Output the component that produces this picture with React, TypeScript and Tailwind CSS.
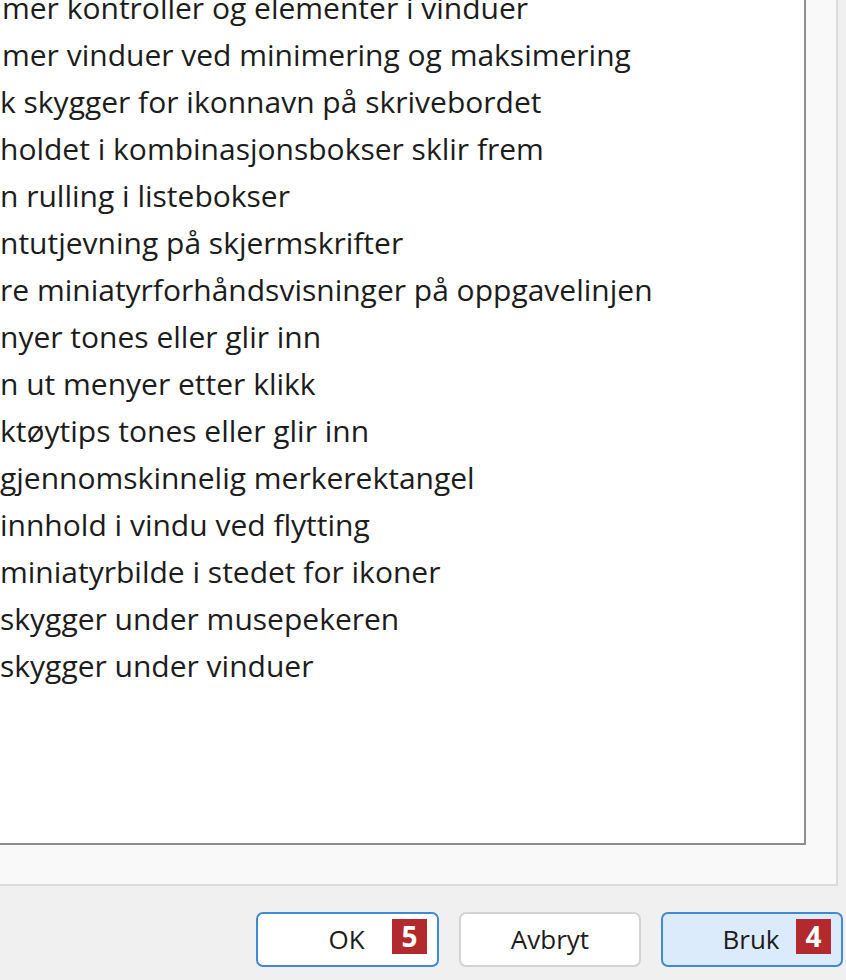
import React from 'react';

const rows: { text: string; indent: string }[] = [
  { text: 'mer kontroller og elementer i vinduer', indent: 'pl-[2px]' },
  { text: 'mer vinduer ved minimering og maksimering', indent: 'pl-[2px]' },
  { text: 'k skygger for ikonnavn på skrivebordet', indent: 'pl-0' },
  { text: 'holdet i kombinasjonsbokser sklir frem', indent: 'pl-0' },
  { text: 'n rulling i listebokser', indent: 'pl-0' },
  { text: 'ntutjevning på skjermskrifter', indent: 'pl-0' },
  { text: 're miniatyrforhåndsvisninger på oppgavelinjen', indent: 'pl-0' },
  { text: 'nyer tones eller glir inn', indent: 'pl-0' },
  { text: 'n ut menyer etter klikk', indent: 'pl-0' },
  { text: 'ktøytips tones eller glir inn', indent: 'pl-0' },
  { text: 'gjennomskinnelig merkerektangel', indent: 'pl-0' },
  { text: 'innhold i vindu ved flytting', indent: 'pl-0' },
  { text: 'miniatyrbilde i stedet for ikoner', indent: 'pl-0' },
  { text: 'skygger under musepekeren', indent: 'pl-0' },
  { text: 'skygger under vinduer', indent: 'pl-0' },
];

function Badge({ n }: { n: string }) {
  return (
    <span className="absolute right-[10px] top-[5px] w-[35px] h-[35px] bg-[#b32a2e] text-white font-bold text-[28px] leading-[35px] text-center">
      {n}
    </span>
  );
}

export default function App() {
  const font = { fontFamily: '"Open Sans", "Noto Sans", sans-serif' };
  return (
    <div className="w-[846px] h-[980px] bg-[#f0f0f0] overflow-hidden" style={font}>
      {/* tab page */}
      <div className="w-[838px] h-[886px] bg-[#f9f9f9] border-r-2 border-b-2 border-[#dcdcdc]">
        {/* effects list */}
        <div className="w-[806px] h-[845px] bg-white border-r-2 border-b-2 border-[#8a8f96] overflow-hidden">
          <ul className="-mt-[16px] text-[30px] leading-[47px] text-[#1c1c1c]">
            {rows.map((r) => (
              <li key={r.text} className={`whitespace-nowrap ${r.indent}`}>
                {r.text}
              </li>
            ))}
          </ul>
        </div>
      </div>

      {/* dialog buttons */}
      <div className="flex gap-[20px] pl-[256px] pt-[26px] text-[26px] text-[#1c1c1c]">
        <button className="relative w-[183px] h-[55px] rounded-[7px] bg-white border-2 border-[#3f8ad3] pr-[2px]">
          OK
          <Badge n="5" />
        </button>
        <button className="relative w-[182px] h-[55px] rounded-[7px] bg-white border-2 border-[#d3d3d3]">
          Avbryt
        </button>
        <button className="relative w-[182px] h-[55px] rounded-[7px] bg-[#dcebfb] border-2 border-[#3f8ad3] pr-[2px]">
          Bruk
          <Badge n="4" />
        </button>
      </div>
    </div>
  );
}
